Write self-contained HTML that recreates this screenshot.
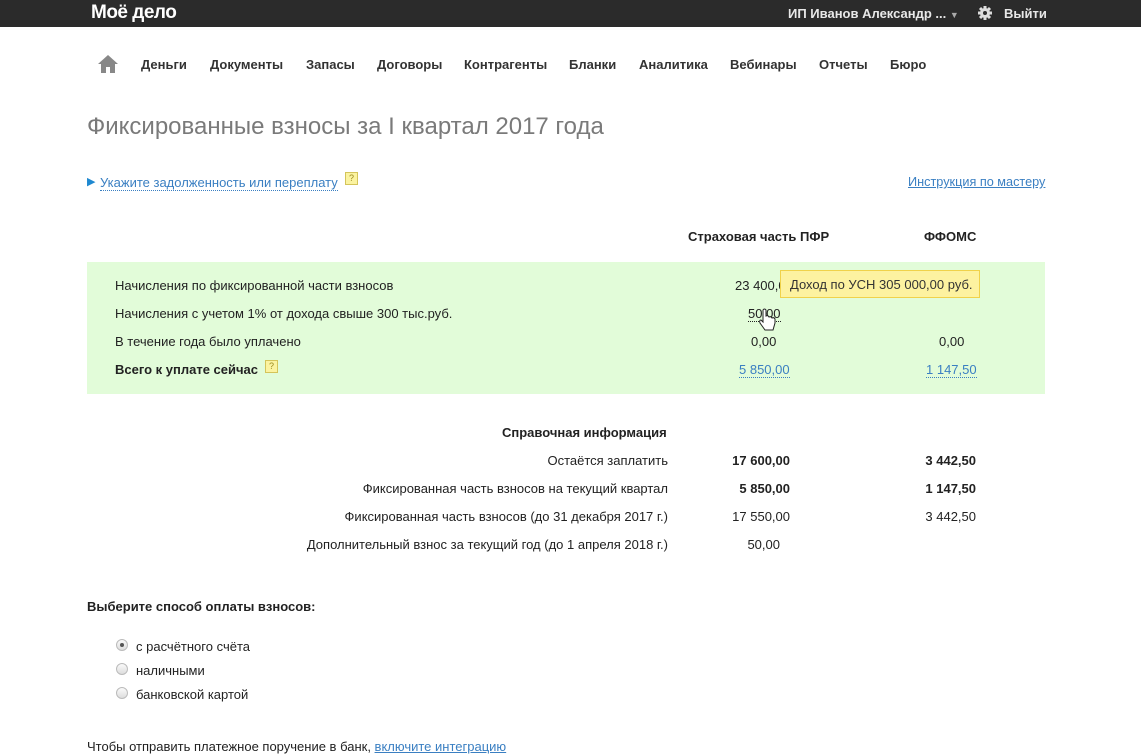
<!DOCTYPE html>
<html><head><meta charset="utf-8"><style>
body{margin:0;width:1141px;height:752px;overflow:hidden;background:#fff;font-family:"Liberation Sans",Arial,sans-serif;color:#222;position:relative}
.a{position:absolute;white-space:nowrap}
.hdr{position:absolute;left:0;top:0;width:1141px;height:27px;background:#2b2b2b}
.nav{font-size:13px;font-weight:bold;color:#333;top:57px}
.t{font-size:13px;line-height:15px}
.r{text-align:right}
.lnk{color:#3a7fc2;border-bottom:1px dotted #3a7fc2}
.b{font-weight:bold}
.q{position:absolute;width:11px;height:11px;background:#fbf3a0;border:1px solid #d4c45a;font-size:9px;color:#9a8a20;text-align:center;line-height:11px}
.rad{position:absolute;width:10px;height:10px;border-radius:50%;border:1px solid #bbb;background:linear-gradient(#fafafa,#ddd)}
</style></head><body>
<div class="hdr"></div>
<div class="a" style="left:91px;top:2px;font-size:19px;font-weight:bold;color:#fff;letter-spacing:-0.5px">Моё дело</div>
<div class="a" style="left:788px;top:6px;font-size:13px;font-weight:bold;color:#e8e8e8">ИП Иванов Александр ... <span style="font-size:9px;color:#aaa">▼</span></div>
<svg class="a" style="left:977px;top:5px" width="16" height="16" viewBox="0 0 16 16"><circle cx="8" cy="8" r="5" fill="#ddd"/><g stroke="#ddd" stroke-width="3"><line x1="8" y1="1" x2="8" y2="15"/><line x1="1" y1="8" x2="15" y2="8"/><line x1="3" y1="3" x2="13" y2="13"/><line x1="13" y1="3" x2="3" y2="13"/></g><circle cx="8" cy="8" r="2" fill="#2b2b2b"/></svg>
<div class="a" style="left:1004px;top:6px;font-size:13px;font-weight:bold;color:#e8e8e8">Выйти</div>

<svg class="a" style="left:98px;top:55px" width="20" height="18" viewBox="0 0 20 18"><path d="M10 0 L20 9 L17 9 L17 18 L12 18 L12 12 L8 12 L8 18 L3 18 L3 9 L0 9Z" fill="#888"/></svg>
<div class="a nav" style="left:141px">Деньги</div>
<div class="a nav" style="left:210px">Документы</div>
<div class="a nav" style="left:306px">Запасы</div>
<div class="a nav" style="left:377px">Договоры</div>
<div class="a nav" style="left:464px">Контрагенты</div>
<div class="a nav" style="left:569px">Бланки</div>
<div class="a nav" style="left:639px">Аналитика</div>
<div class="a nav" style="left:730px">Вебинары</div>
<div class="a nav" style="left:819px">Отчеты</div>
<div class="a nav" style="left:890px">Бюро</div>

<div class="a" style="left:87px;top:113px;font-size:24px;color:#7a7a7a">Фиксированные взносы за I квартал 2017 года</div>

<div class="a" style="left:87px;top:175px;font-size:11px;color:#1e88d0">▶</div>
<div class="a t" style="left:100px;top:175px;font-size:13px"><span class="lnk">Укажите задолженность или переплату</span></div>
<div class="q" style="left:345px;top:172px">?</div>
<div class="a t" style="left:908px;top:175px;font-size:12.7px;color:#3a7fc2;text-decoration:underline">Инструкция по мастеру</div>

<div class="a t b" style="left:688px;top:229px">Страховая часть ПФР</div>
<div class="a t b" style="left:924px;top:229px">ФФОМС</div>

<div class="a" style="left:87px;top:262px;width:958px;height:132px;background:#e2fcd9"></div>
<div class="a t" style="left:115px;top:278px">Начисления по фиксированной части взносов</div>
<div class="a t" style="left:115px;top:306px">Начисления с учетом 1% от дохода свыше 300 тыс.руб.</div>
<div class="a t" style="left:115px;top:334px">В течение года было уплачено</div>
<div class="a t b" style="left:115px;top:362px">Всего к уплате сейчас</div>
<div class="q" style="left:265px;top:360px">?</div>
<div class="a t" style="left:735px;top:278px">23 400,00</div>
<div class="a t" style="left:748px;top:306px;border-bottom:1px dotted #222">50,00</div>
<div class="a t" style="left:751px;top:334px">0,00</div>
<div class="a t" style="left:939px;top:334px">0,00</div>
<div class="a t" style="left:739px;top:362px"><span class="lnk">5 850,00</span></div>
<div class="a t" style="left:926px;top:362px"><span class="lnk">1 147,50</span></div>
<div class="a t" style="left:780px;top:270px;width:200px;height:28px;background:#fdf2a0;border:1px solid #f0d24a;box-sizing:border-box;padding:6px 0 0 9px;color:#333">Доход по УСН 305 000,00 руб.</div>
<svg class="a" style="left:757px;top:308px" width="20" height="26" viewBox="0 0 20 26"><path d="M6 2 L6 14 L4 12 Q2 12 3 15 L8 22 L16 22 L18 15 L18 11 Q17 9 15 10 Q14 8 12 9 Q11 7 9 8 L9 2 Q7.5 0 6 2Z" fill="#fff" stroke="#222" stroke-width="1"/></svg>

<div class="a t b" style="left:502px;top:425px">Справочная информация</div>
<div class="a t r" style="left:200px;width:468px;top:453px">Остаётся заплатить</div>
<div class="a t r" style="left:200px;width:468px;top:481px">Фиксированная часть взносов на текущий квартал</div>
<div class="a t r" style="left:200px;width:468px;top:509px">Фиксированная часть взносов (до 31 декабря 2017 г.)</div>
<div class="a t r" style="left:200px;width:468px;top:537px">Дополнительный взнос за текущий год (до 1 апреля 2018 г.)</div>
<div class="a t b r" style="left:690px;width:100px;top:453px">17 600,00</div>
<div class="a t b r" style="left:690px;width:100px;top:481px">5 850,00</div>
<div class="a t r" style="left:690px;width:100px;top:509px">17 550,00</div>
<div class="a t r" style="left:690px;width:90px;top:537px">50,00</div>
<div class="a t b r" style="left:876px;width:100px;top:453px">3 442,50</div>
<div class="a t b r" style="left:876px;width:100px;top:481px">1 147,50</div>
<div class="a t r" style="left:876px;width:100px;top:509px">3 442,50</div>

<div class="a b" style="left:87px;top:599px;font-size:13px">Выберите способ оплаты взносов:</div>
<div class="rad" style="left:116px;top:639px"><div style="position:absolute;left:3px;top:3px;width:4px;height:4px;border-radius:50%;background:#555"></div></div>
<div class="rad" style="left:116px;top:663px"></div>
<div class="rad" style="left:116px;top:687px"></div>
<div class="a t" style="left:136px;top:639px">с расчётного счёта</div>
<div class="a t" style="left:136px;top:663px">наличными</div>
<div class="a t" style="left:136px;top:687px">банковской картой</div>
<div class="a t" style="left:87px;top:739px">Чтобы отправить платежное поручение в банк, <span style="color:#3a7fc2;text-decoration:underline">включите интеграцию</span></div>
</body></html>
